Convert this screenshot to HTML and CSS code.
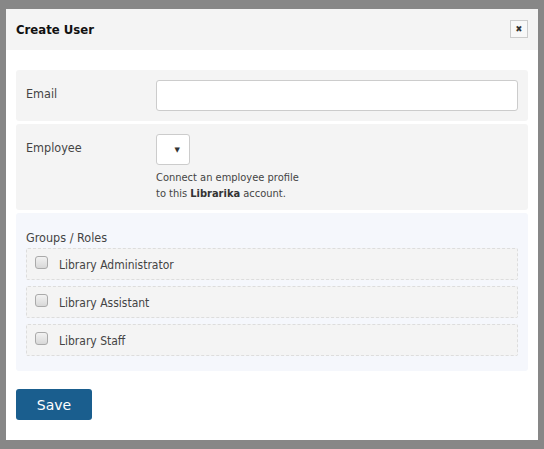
FILE: index.html
```html
<!DOCTYPE html>
<html>
<head>
<meta charset="utf-8">
<link rel="stylesheet" href="styles.css">
</head>
<body>
<div class="dialog">
  <div class="dlg-header">
    <span class="dlg-title">Create User</span>
    <span class="dlg-close">&#x2716;</span>
  </div>
  <div class="dlg-body">
    <div class="row">
      <div class="row-label">Email</div>
      <div class="row-field"><div class="input"></div></div>
    </div>
    <div class="row">
      <div class="row-label">Employee</div>
      <div class="row-field">
        <div class="select"><span class="caret">&#9660;</span></div>
        <div class="help">Connect an employee profile<br>to this <b>Librarika</b> account.</div>
      </div>
    </div>
    <div class="groups">
      <div class="groups-title">Groups / Roles</div>
      <div class="item"><span class="cb"></span><span>Library Administrator</span></div>
      <div class="item"><span class="cb"></span><span>Library Assistant</span></div>
      <div class="item"><span class="cb"></span><span>Library Staff</span></div>
    </div>
    <div class="actions"><span class="btn">Save</span></div>
  </div>
</div>
</body>
</html>
```
FILE: styles.css
```css
html, body { margin: 0; padding: 0; }
body {
  background: #878787;
  padding: 9px 6px;
  font-family: "DejaVu Sans Condensed", "DejaVu Sans", Verdana, sans-serif;
  font-size: 12.5px;
  color: #444;
}
.dialog {
  background: #fff;
  height: 431px;
  display: flex;
  flex-direction: column;
}
.dlg-header {
  height: 41px;
  background: #f4f4f4;
  display: flex;
  align-items: center;
  justify-content: space-between;
  padding: 0 10px;
}
.dlg-title { font-weight: bold; font-size: 13px; color: #111; }
.dlg-close {
  width: 16px; height: 16px;
  border: 1px solid #ccc;
  background: #f8f8f8;
  font-size: 9px;
  color: #333;
  display: flex; align-items: center; justify-content: center;
  margin-top: -2px;
}
.dlg-body {
  padding: 20px 10px;
  display: flex;
  flex-direction: column;
  gap: 3px;
}
.row {
  background: #f4f4f4;
  border-radius: 3px;
  display: flex;
  padding: 10px 10px 10px 10px;
}
.row + .row { padding-bottom: 8px; }
.row-label { width: 130px; flex: none; line-height: 16px; padding-top: 6px; }
.row-field { flex: 1; }
.input {
  height: 29px;
  background: #fff;
  border: 1px solid #ccc;
  border-radius: 3px;
}
.select {
  width: 32px; height: 29px;
  background: #fff;
  border: 1px solid #ccc;
  border-radius: 3px;
  display: flex; align-items: center; justify-content: flex-end;
  box-sizing: content-box;
}
.caret { font-size: 7px; color: #333; margin-right: 9px; font-family: "DejaVu Sans", sans-serif; }
.help { margin-top: 5px; font-size: 11px; line-height: 16px; color: #444; }
.help b { color: #333; }
.groups {
  background: #f5f7fc;
  border-radius: 3px;
  padding: 17px 10px 15px;
  display: flex;
  flex-direction: column;
}
.groups-title { line-height: 16px; margin-bottom: 2px; }
.item {
  height: 30px;
  border: 1px dashed #ddd;
  background: #f4f4f4;
  border-radius: 2px;
  display: flex;
  align-items: center;
  padding-left: 8px;
  margin-bottom: 6px;
  font-size: 12px;
}
.item span:last-child { margin-top: 1px; }
.item:last-child { margin-bottom: 0; }
.cb {
  width: 11px; height: 11px;
  border: 1px solid #aaa;
  border-radius: 3px;
  background: linear-gradient(#f2f2f2, #d8d8d8);
  margin-right: 11px;
  margin-top: -3px;
}
.actions { margin-top: 15px; display: flex; }
.btn {
  width: 76px; height: 31px;
  background: #1a5e8e;
  border-radius: 3px;
  color: #fff;
  font-size: 14px;
  font-family: "DejaVu Sans", sans-serif;
  display: flex; align-items: center; justify-content: center;
}
```
